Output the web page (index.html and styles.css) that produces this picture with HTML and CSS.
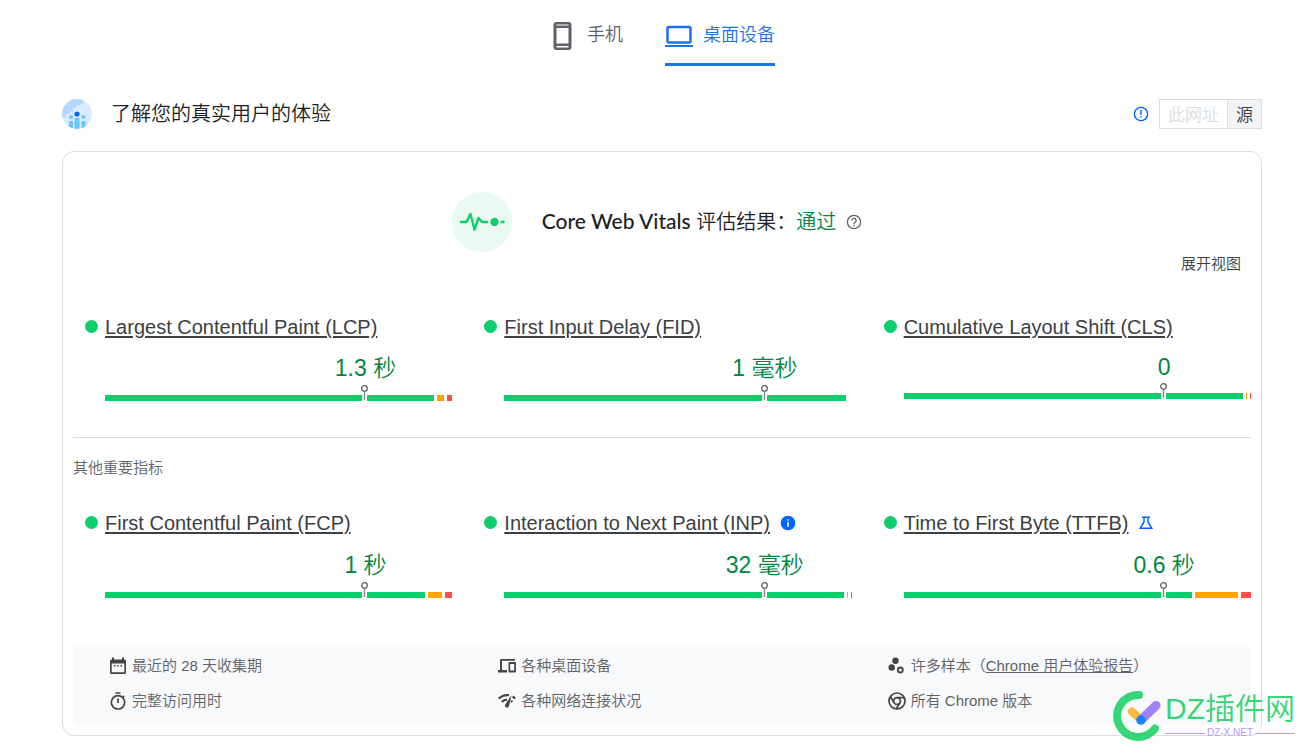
FILE: index.html
```html
<!DOCTYPE html>
<html lang="zh-CN">
<head>
<meta charset="utf-8">
<meta name="viewport" content="width=device-width, initial-scale=1">
<title>了解您的真实用户的体验</title>
<link rel="stylesheet" href="styles.css">
</head>
<body>
<svg class="sprite" aria-hidden="true"><symbol id="pin" viewBox="0 0 7 16"><path fill="#fff" d="M1 9h5v7H1z"/><circle cx="3.500" cy="3.500" r="2.800" fill="#fff" stroke="#5f6368" stroke-width="1.300"/><path d="M3.500 6.500V15" stroke="#80868b" stroke-width="1.300"/></symbol></svg>
<div class="page">
  <nav class="tabs" role="tablist">
    <button class="tab" role="tab" aria-selected="false">
      <svg class="tab-icon" viewBox="0 0 28 28" aria-hidden="true"><path fill="currentColor" fill-rule="evenodd" d="M7.500 0h12a3 3 0 0 1 3 3v22a3 3 0 0 1-3 3h-12a3 3 0 0 1-3-3V3a3 3 0 0 1 3-3zM7.500 2.500v1h12v-1zM7.500 6v15.500h12V6zM7.500 24v1.500h12V24z"/></svg>
      <span>手机</span>
    </button>
    <button class="tab tab-active" role="tab" aria-selected="true">
      <svg class="tab-icon" viewBox="0 0 28 28" aria-hidden="true"><rect x="2.500" y="5" width="23" height="15.500" rx="1.500" fill="none" stroke="currentColor" stroke-width="2.500"/><path d="M0 24h28" stroke="currentColor" stroke-width="2"/></svg>
      <span>桌面设备</span>
    </button>
  </nav>

  <header class="heading">
    <svg class="heading-icon" viewBox="0 0 30 30" aria-hidden="true">
      <defs><clipPath id="disc"><circle cx="15" cy="15" r="15"/></clipPath></defs>
      <g clip-path="url(#disc)">
        <path fill="#dbebff" d="M0 0h30v30H0z"/>
        <path fill="#b3d7ff" d="M0 0h21v4l-2 2h-5v3h-3v4H8v2H4v3H0z"/>
        <g fill="#66c8ff"><circle cx="9" cy="18" r="2"/><circle cx="21.500" cy="18" r="2"/><path d="M7 22h4v8H7zM12.500 20.500a2.500 2.500 0 0 1 5 0V30h-5zM19.500 22h4v8h-4z"/></g>
        <circle cx="15" cy="15" r="4" fill="#e6f2ff"/><circle cx="15" cy="15" r="2.600" fill="#06f"/>
      </g>
    </svg>
    <h1 class="heading-title">了解您的真实用户的体验</h1>
    <svg class="icon-small blue" viewBox="0 0 16 16" aria-hidden="true"><circle cx="8" cy="8" r="6.600" fill="none" stroke="currentColor" stroke-width="1.400"/><path fill="currentColor" d="M7.300 4h1.400v5H7.300zm0 6h1.400v1.400H7.300z"/></svg>
    <div class="scope">
      <button class="scope-button" disabled>此网址</button>
      <button class="scope-button scope-active">源</button>
    </div>
  </header>

  <main class="card">
    <section class="summary">
      <svg class="summary-icon" viewBox="0 0 60 60" aria-hidden="true"><circle cx="30" cy="30" r="30" fill="#e9faf2"/><path d="M8 30h6.500L18.500 22l4 15.500 4-11.500L30 30h6.500M48 30h4.500" fill="none" stroke="#0cce6b" stroke-width="2.400" stroke-linejoin="round"/><circle cx="42.500" cy="30" r="6.200" fill="#fff"/><circle cx="42.500" cy="30" r="4.200" fill="#0cce6b"/></svg>
      <h2 class="summary-title"><span class="summary-name">Core Web Vitals</span> 评估结果：<span class="pass">通过</span></h2>
      <svg class="icon-small help" viewBox="0 0 16 16" aria-hidden="true"><circle cx="8" cy="8" r="6.600" fill="none" stroke="currentColor" stroke-width="1.300"/><path d="M5.900 6.600a2.100 2.100 0 1 1 3.400 1.600C8.500 8.800 8 9.100 8 10" fill="none" stroke="currentColor" stroke-width="1.300"/><path fill="currentColor" d="M7.300 10.800h1.400v1.400H7.300z"/></svg>
    </section>
    <div class="expand"><button class="expand-button">展开视图</button></div>

    <section class="metrics">
      <article class="metric">
        <h3 class="metric-name"><a href="#lcp">Largest Contentful Paint (LCP)</a></h3>
        <p class="value">1.3 秒</p>
        <div class="bar"><i class="good" style="flex-grow:329"></i><i class="average" style="flex-grow:7"></i><i class="poor" style="flex-grow:5"></i><svg class="marker"><use href="#pin"/></svg></div>
      </article>
      <article class="metric">
        <h3 class="metric-name"><a href="#fid">First Input Delay (FID)</a></h3>
        <p class="value">1 毫秒</p>
        <div class="bar"><i class="good" style="flex-grow:342"></i><i class="average" style="flex-grow:0"></i><i class="poor" style="flex-grow:0"></i><svg class="marker"><use href="#pin"/></svg></div>
      </article>
      <article class="metric">
        <h3 class="metric-name"><a href="#cls">Cumulative Layout Shift (CLS)</a></h3>
        <p class="value value-number">0</p>
        <div class="bar"><i class="good" style="flex-grow:339"></i><i class="average" style="flex-grow:1"></i><i class="poor" style="flex-grow:1"></i><svg class="marker"><use href="#pin"/></svg></div>
      </article>
    </section>

    <h2 class="subheading">其他重要指标</h2>

    <section class="metrics metrics-other">
      <article class="metric">
        <h3 class="metric-name"><a href="#fcp">First Contentful Paint (FCP)</a></h3>
        <p class="value">1 秒</p>
        <div class="bar"><i class="good" style="flex-grow:320"></i><i class="average" style="flex-grow:14"></i><i class="poor" style="flex-grow:7"></i><svg class="marker"><use href="#pin"/></svg></div>
      </article>
      <article class="metric">
        <h3 class="metric-name"><a href="#inp">Interaction to Next Paint (INP)</a><svg class="icon-small blue" viewBox="0 0 16 16" aria-hidden="true"><circle cx="8" cy="8" r="7.300" fill="currentColor"/><path fill="#fff" d="M7.300 4.200h1.500v1.500H7.300zm0 2.700h1.500v5H7.300z"/></svg></h3>
        <p class="value">32 毫秒</p>
        <div class="bar"><i class="good" style="flex-grow:339"></i><i class="average" style="flex-grow:1"></i><i class="poor" style="flex-grow:1"></i><svg class="marker"><use href="#pin"/></svg></div>
      </article>
      <article class="metric">
        <h3 class="metric-name"><a href="#ttfb">Time to First Byte (TTFB)</a><svg class="icon-small blue" viewBox="0 0 16 16" aria-hidden="true"><path d="M4 2.200h8M6 2.200V7L2.200 13.300h11.600L10 7V2.200" fill="none" stroke="currentColor" stroke-width="1.500"/></svg></h3>
        <p class="value">0.6 秒</p>
        <div class="bar"><i class="good" style="flex-grow:288"></i><i class="average" style="flex-grow:43"></i><i class="poor" style="flex-grow:10"></i><svg class="marker"><use href="#pin"/></svg></div>
      </article>
    </section>

    <ul class="facts">
      <li class="fact"><svg class="icon" viewBox="0 0 18 18" aria-hidden="true"><path fill="currentColor" fill-rule="evenodd" d="M3 .5h2v2h8v-2h2v2h.5A1.500 1.500 0 0 1 17 4v11.500a1.500 1.500 0 0 1-1.500 1.500h-13A1.500 1.500 0 0 1 1 15.500V4a1.500 1.500 0 0 1 1.500-1.500H3zM2.700 6.500v8.800h12.600V6.500zM5 8h1.500v1.500H5zm3.300 0h1.500v1.500H8.300zm3.200 0H13v1.500h-1.500z"/></svg><span>最近的 28 天收集期</span></li>
      <li class="fact"><svg class="icon" viewBox="0 0 18 18" aria-hidden="true"><path fill="currentColor" fill-rule="evenodd" d="M3 2h14v1.700H4V13h5v2.500H0V13h2V3.500A1.500 1.500 0 0 1 3 2zM11.500 5h5.500a1 1 0 0 1 1 1v8.500a1 1 0 0 1-1 1h-5.500a1 1 0 0 1-1-1V6a1 1 0 0 1 1-1zm.7 2v6.500h4V7z"/></svg><span>各种桌面设备</span></li>
      <li class="fact"><svg class="icon" viewBox="0 0 18 18" aria-hidden="true"><circle cx="7.500" cy="3.700" r="3.200" fill="currentColor"/><circle cx="3.700" cy="10.500" r="3.200" fill="currentColor"/><circle cx="12.300" cy="13" r="2.500" fill="none" stroke="currentColor" stroke-width="1.800"/></svg><span>许多样本（<a href="#crux">Chrome 用户体验报告</a>）</span></li>
      <li class="fact"><svg class="icon" viewBox="0 0 18 18" aria-hidden="true"><path fill="none" stroke="currentColor" stroke-width="1.700" d="M6.500 1h5M9 6.500V11M13.800 5.200 15.200 3.800"/><circle cx="9" cy="10.300" r="6.700" fill="none" stroke="currentColor" stroke-width="1.700"/></svg><span>完整访问用时</span></li>
      <li class="fact"><svg class="icon" viewBox="0 0 18 18" aria-hidden="true"><path fill="none" stroke="currentColor" stroke-width="2.200" d="M.8 6.600A12 12 0 0 1 11 3.200M14.500 4.500a11 11 0 0 1 2.700 2.100M3.800 10a7.500 7.500 0 0 1 5.200-2.400M13 8.800l1.300 1.200"/><path fill="currentColor" d="M13.500 3 11 14a2 2 0 1 1-3.600-1.600z"/></svg><span>各种网络连接状况</span></li>
      <li class="fact"><svg class="icon" viewBox="0 0 18 18" aria-hidden="true"><g fill="none" stroke="currentColor" stroke-width="1.700"><circle cx="9" cy="9" r="8"/><circle cx="9" cy="9" r="3.400"/><path d="M9 5.600h7.200M6.100 10.800 2.400 4.500M11.900 10.800 8.300 17"/></g></svg><span>所有 Chrome 版本</span></li>
    </ul>
  </main>

  <aside class="brand">
    <svg class="brand-logo" viewBox="0 0 48 52" aria-hidden="true"><g fill="none" stroke-linecap="round"><path d="M25 5A21 21 0 1 0 41 38.500" stroke="#36d576" stroke-width="8"/><path d="M18 21.500 27 30" stroke="#ffb73d" stroke-width="8"/><path d="M27 30 42 15.500" stroke="#a181ff" stroke-width="9"/></g><circle cx="27" cy="30" r="4.700" fill="#1685ff"/></svg>
    <div class="brand-text"><strong class="brand-name">DZ插件网</strong><span class="brand-site">DZ-X.NET</span></div>
  </aside>
</div>
</body>
</html>
```
FILE: styles.css
```css
* {
  box-sizing: border-box;
}

body {
  margin: 0;
  background: #fff;
  color: #202124;
  font-family: "Liberation Sans", "Noto Sans CJK SC", sans-serif;
  font-weight: 350;
}

button {
  padding: 0;
  border: 0;
  background: none;
  color: inherit;
  font: inherit;
}

h1, h2, h3, p, ul {
  margin: 0;
  padding: 0;
  font-weight: 350;
}

svg {
  flex: none;
}

.sprite {
  position: absolute;
  width: 0;
  height: 0;
}

.page {
  position: relative;
  padding: 0 52px 20px 62px;
}

.tabs {
  display: flex;
  justify-content: center;
  gap: 42px;
  height: 66px;
}

.tab {
  display: flex;
  align-items: center;
  gap: 10px;
  padding-top: 4px;
  border-bottom: 3px solid transparent;
  color: #5f6368;
  font-size: 18px;
}

.tab span {
  padding-bottom: 2px;
}

.tab-active {
  border-color: #1a73e8;
  color: #1a73e8;
}

.tab-icon {
  width: 28px;
  height: 28px;
  margin-top: 4px;
}

.heading {
  display: flex;
  align-items: center;
  height: 30px;
  margin: 33px 0 22px;
}

.heading-icon {
  width: 30px;
  height: 30px;
}

.heading-title {
  flex: 1;
  margin-left: 19px;
  padding-bottom: 4px;
  font-size: 20px;
}

.icon-small {
  width: 16px;
  height: 16px;
}

.blue {
  color: #06f;
}

.scope {
  display: flex;
  height: 30px;
  margin-left: 10px;
}

.scope-button {
  padding: 0 8px 2px;
  border: 1px solid #dadce0;
  font-size: 17px;
}

.scope-button:disabled {
  border-right: 0;
  color: #dadce0;
}

.scope-active {
  background: #f1f3f4;
  color: #3c4043;
}

.card {
  padding: 40px 10px 10px;
  border: 1px solid #dadce0;
  border-radius: 12px;
}

.summary {
  display: flex;
  align-items: center;
  justify-content: center;
  margin-right: 10px;
}

.summary-icon {
  width: 60px;
  height: 60px;
  margin-right: 30px;
}

.summary-title {
  padding-bottom: 4px;
  font-size: 20px;
}

.summary-name {
  font-family: Lato, "Liberation Sans", sans-serif;
  font-size: 21px;
  font-weight: 500;
}

.pass {
  color: #018642;
}

.help {
  margin-left: 10px;
  color: #5f6368;
}

.expand {
  display: flex;
  justify-content: flex-end;
  padding-right: 10px;
}

.expand-button {
  color: #3c4043;
  font-size: 15px;
  line-height: 24px;
}

.metrics {
  display: grid;
  grid-template-columns: repeat(3, 1fr);
  gap: 32px;
  padding: 37px 0 36px 12px;
  border-bottom: 1px solid #dadce0;
}

.metric {
  padding-left: 20px;
}

.metric-name {
  display: flex;
  align-items: center;
  gap: 10px;
  font-size: 20px;
  line-height: 28px;
}

.metric-name::before {
  content: "";
  width: 13px;
  height: 13px;
  margin: 0 -3px 2px -20px;
  border-radius: 50%;
  background: #0cce6b;
}

.metric-name a {
  color: #3c4043;
  text-decoration-thickness: 2px;
  text-underline-offset: 2px;
}

.value {
  display: flex;
  justify-content: center;
  margin: 11px 0 11px 50%;
  width: 50%;
  color: #018642;
  font-size: 23px;
  line-height: 32px;
}

.value-number {
  line-height: 30px;
}

.bar {
  position: relative;
  display: flex;
  gap: 3px;
  height: 6px;
}

.good {
  background: #0cce6b;
}

.average {
  background: #ffa400;
}

.poor {
  background: #ff4e42;
}

.marker {
  position: absolute;
  bottom: 0;
  left: 75%;
  width: 7px;
  height: 16px;
  margin-left: -4px;
}

.subheading {
  margin-top: 18px;
  color: #5f6368;
  font-size: 15px;
  line-height: 24px;
}

.metrics-other {
  padding: 29px 0 47px 12px;
  border-bottom: 0;
}

.metrics-other .value {
  margin-top: 12px;
}

.facts {
  display: grid;
  grid-template-columns: repeat(3, 1fr);
  padding: 3px 10px 7px 0;
  border-radius: 4px;
  background: #f8f9fb;
  list-style: none;
}

.fact {
  display: flex;
  align-items: center;
  gap: 5px;
  height: 35px;
  padding-left: 36px;
  color: #5f6368;
  font-size: 15px;
  white-space: nowrap;
}

.fact span {
  padding-bottom: 2px;
}

.fact a {
  color: inherit;
}

.icon {
  width: 18px;
  height: 18px;
  color: #444;
}

.brand {
  position: absolute;
  right: 19px;
  bottom: 14px;
  display: flex;
  gap: 3px;
}

.brand-logo {
  width: 48px;
  height: 52px;
  overflow: visible;
}

.brand-text {
  display: flex;
  flex-direction: column;
  color: #36d576;
}

.brand-name {
  font-size: 30px;
  font-weight: 350;
  line-height: 38px;
}

.brand-site {
  display: flex;
  align-items: center;
  gap: 2px;
  color: #b39bff;
  font-size: 10px;
  line-height: 10px;
}

.brand-site::before,
.brand-site::after {
  content: "";
  flex: 1;
  height: 1px;
  background: currentColor;
}
```
